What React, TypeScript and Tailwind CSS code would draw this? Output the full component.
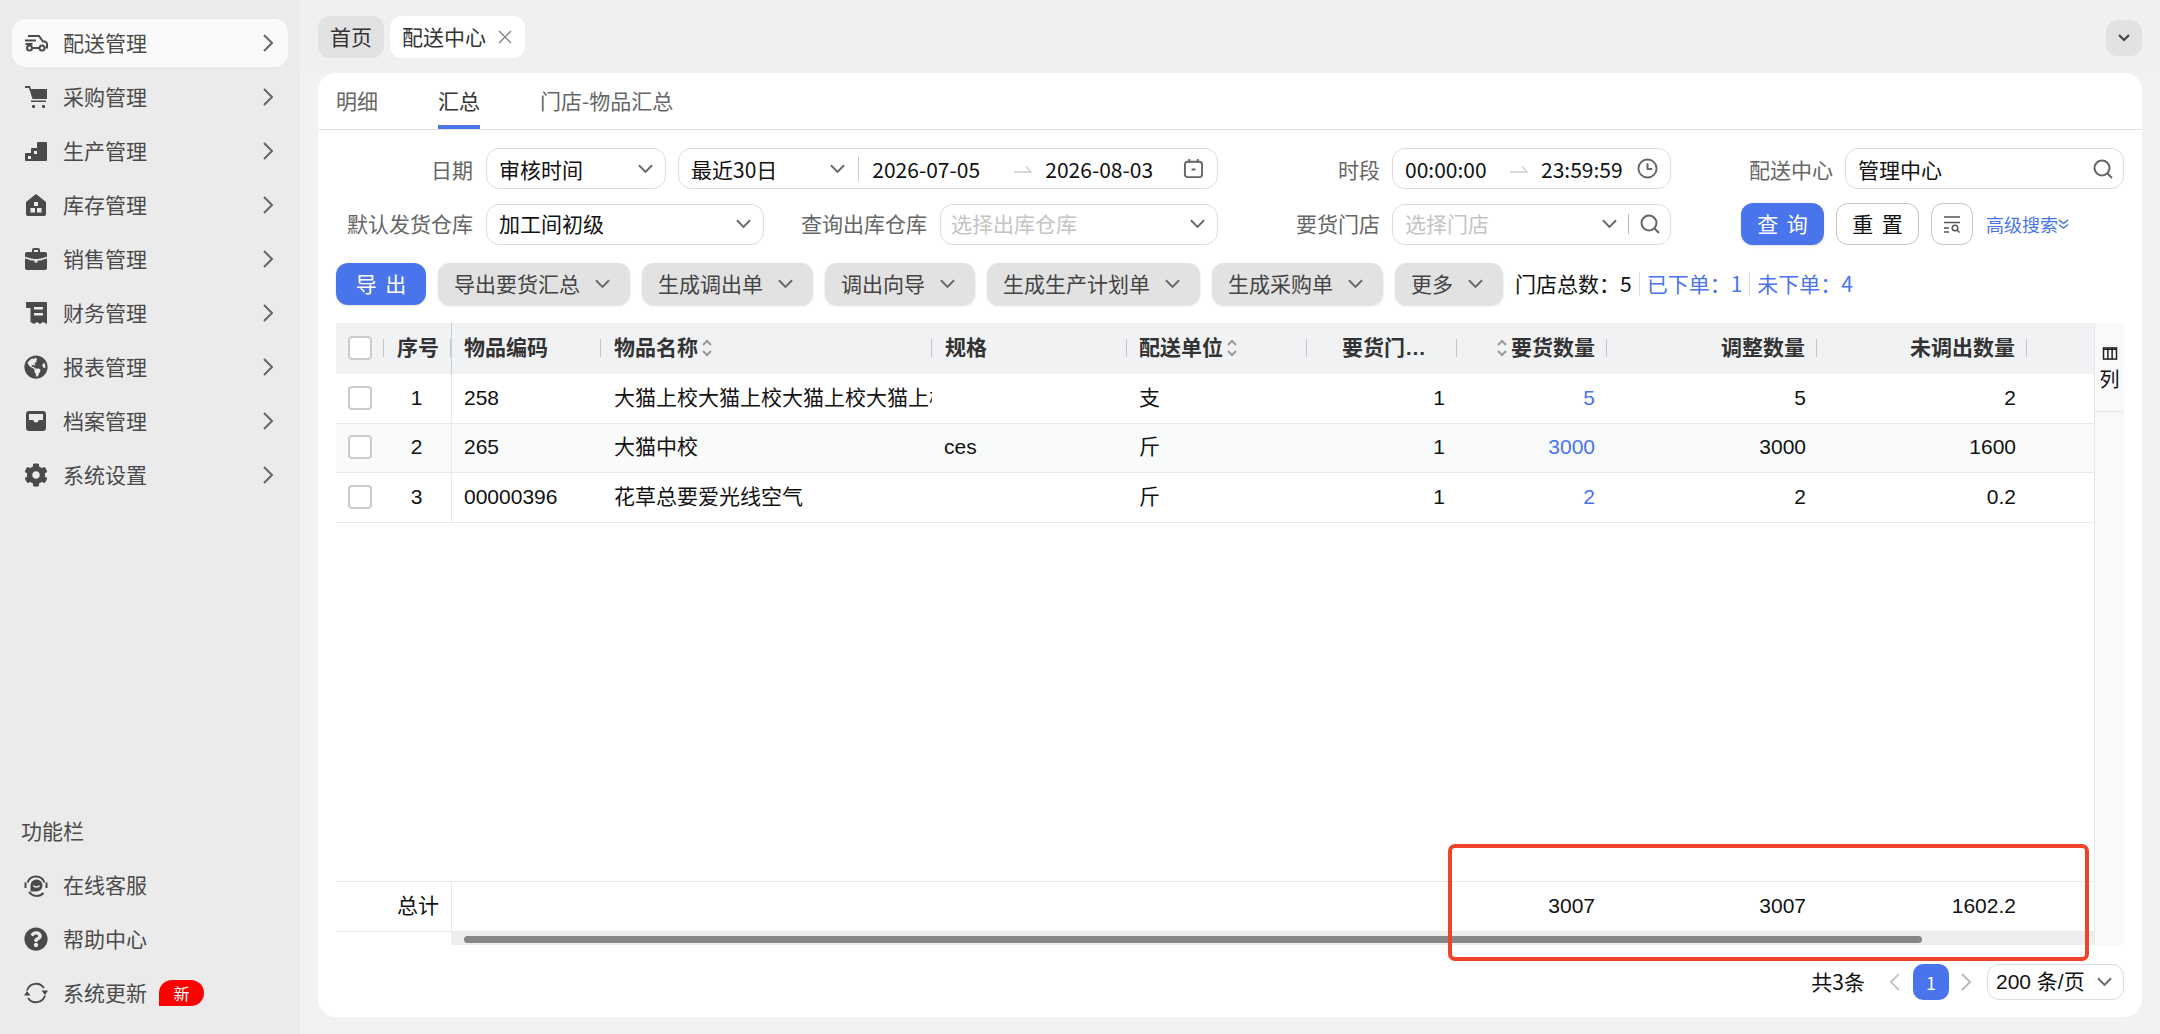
import React from 'react';
import { FaGlobeAmericas, FaCog, FaQuestionCircle } from 'react-icons/fa';

const Chevron = ({ className = 'w-[15px] h-[10px] text-[#666]' }: { className?: string }) => (
  <svg viewBox="0 0 16 10" className={`shrink-0 ${className}`} fill="none" stroke="currentColor" strokeWidth="2">
    <polyline points="1,1 8,8 15,1" />
  </svg>
);

const ChevronRight = ({ className = 'w-[10px] h-[18px] text-[#666]' }: { className?: string }) => (
  <svg viewBox="0 0 10 18" className={`shrink-0 ${className}`} fill="none" stroke="currentColor" strokeWidth="2">
    <polyline points="1,1 9,9 1,17" />
  </svg>
);

const ChevronLeft = () => (
  <svg viewBox="0 0 10 18" className="w-[10px] h-[18px] text-[#bbb]" fill="none" stroke="currentColor" strokeWidth="1.6">
    <polyline points="9,1 1,9 9,17" />
  </svg>
);

const SearchIcon = () => (
  <svg viewBox="0 0 20 20" className="w-[20px] h-[20px] text-[#666] shrink-0" fill="none" stroke="currentColor" strokeWidth="2">
    <circle cx="9" cy="9" r="7.5" />
    <path d="M14.5 14.5 19 19" />
  </svg>
);

const Arrow = () => (
  <svg viewBox="0 0 18 8" className="w-[18px] h-[8px] text-[#ccc] shrink-0" fill="none" stroke="currentColor" strokeWidth="1.3">
    <path d="M0 7h17L12 1.5" />
  </svg>
);

const Sort = () => (
  <svg viewBox="0 0 10 18" className="w-[10px] h-[18px] text-[#999] shrink-0" fill="none" stroke="currentColor" strokeWidth="2">
    <polyline points="1,6 5,2 9,6" />
    <polyline points="1,12 5,16 9,12" />
  </svg>
);

const iconClass = 'w-[24px] h-[24px] text-[#4a4a4a]';

const CarIcon = () => (
  <svg viewBox="0 0 24 24" className={iconClass} fill="none" stroke="currentColor" strokeWidth="2">
    <path d="M4 5h11l4 5.5h1.5c1 0 2.5 1 2.5 2.5v3.500h-1.500" />
    <path d="M1 9.500h11M1.500 13h7" />
    <circle cx="5.500" cy="17" r="2.500" />
    <circle cx="18" cy="17" r="2.500" />
    <path d="M8.500 17h6.500" />
  </svg>
);

const CartIcon = () => (
  <svg viewBox="0 0 24 24" className={iconClass} fill="currentColor">
    <path d="M1 1h5l1 3h16v10H8.500L5 3H1z" />
    <rect x="7" y="15.500" width="15" height="1.500" />
    <rect x="8" y="20" width="3" height="3" rx="1" />
    <rect x="18" y="20" width="3" height="3" rx="1" />
  </svg>
);

const StairsIcon = () => (
  <svg viewBox="0 0 24 24" className={iconClass} fill="currentColor">
    <path d="M2 22a1 1 0 0 1-1-1v-6a1 1 0 0 1 1-1h5V10a1 1 0 0 1 1-1h5V4a1 1 0 0 1 1-1h8a1 1 0 0 1 1 1v17a1 1 0 0 1-1 1z" />
    <rect x="4" y="17" width="3" height="3" fill="#ebebeb" />
    <rect x="10" y="12" width="3" height="3" fill="#ebebeb" />
  </svg>
);

const HouseIcon = () => (
  <svg viewBox="0 0 24 24" className={iconClass} fill="currentColor">
    <path d="M2 9 12 1l10 8v12a2 2 0 0 1-2 2H4a2 2 0 0 1-2-2z" />
    <rect x="10" y="9" width="4" height="4" fill="#ebebeb" />
    <rect x="6.500" y="15" width="4.500" height="4.500" fill="#ebebeb" />
    <rect x="13" y="15" width="4.500" height="4.500" fill="#ebebeb" />
  </svg>
);

const CaseIcon = () => (
  <svg viewBox="0 0 24 24" className={iconClass} fill="currentColor">
    <path d="M8 5V3a2 2 0 0 1 2-2h4a2 2 0 0 1 2 2v2h5a2 2 0 0 1 2 2v14a2 2 0 0 1-2 2H3a2 2 0 0 1-2-2V7a2 2 0 0 1 2-2zm2 0h4V3h-4z" />
    <path d="M1 10.500c5 2 8 2.500 11 2.500s6-.5 11-2.500" fill="none" stroke="#ebebeb" strokeWidth="1.600" />
    <rect x="10.500" y="12" width="3" height="3.500" fill="#ebebeb" />
  </svg>
);

const ReceiptIcon = () => (
  <svg viewBox="0 0 24 24" className={iconClass} fill="currentColor">
    <path d="M2 1h20a1 1 0 0 1 1 1v21l-4-2-3 2-3-2-3 2-3.500-2V7H3a1 1 0 0 1-1-1z" />
    <rect x="10" y="6" width="9" height="2.500" fill="#ebebeb" />
    <rect x="10" y="12" width="9" height="2.500" fill="#ebebeb" />
  </svg>
);

const InboxIcon = () => (
  <svg viewBox="0 0 24 24" className={iconClass} fill="currentColor">
    <path d="M5 2h14a3 3 0 0 1 3 3v14a3 3 0 0 1-3 3H5a3 3 0 0 1-3-3V5a3 3 0 0 1 3-3z" />
    <path d="M5 5h14v6h-4.500a2.500 2.500 0 0 1-5 0H5z" fill="#ebebeb" />
  </svg>
);

const ServiceIcon = () => (
  <svg viewBox="0 0 24 24" className={iconClass} fill="none" stroke="currentColor" strokeWidth="2">
    <path d="M3.500 9.500a9 9 0 0 1 17 0" />
    <path d="M5 19a9.500 9.500 0 0 0 14.500 1" />
    <rect x="0.500" y="9.500" width="2" height="5.500" fill="currentColor" stroke="none" />
    <rect x="21.500" y="9.500" width="2" height="5.500" fill="currentColor" stroke="none" />
    <path d="M12.500 6.500a6 6 0 0 1 6 6 6 6 0 0 1-6 6h-6v-6a6 6 0 0 1 6-6z" fill="currentColor" stroke="none" />
    <path d="M9.500 12.500c.8 2 5 2 6 0" stroke="#ebebeb" strokeWidth="1.500" />
  </svg>
);

const RefreshIcon = () => (
  <svg viewBox="0 0 24 24" className={iconClass} fill="none" stroke="currentColor" strokeWidth="1.800">
    <path d="M3 9.500A9.500 9.500 0 0 1 20 7" />
    <path d="M21 14.500A9.500 9.500 0 0 1 4 17" />
    <path d="M17.500 9.500H24L21 14z" fill="currentColor" stroke="none" />
    <path d="M0 14.500h6.500L3 10z" fill="currentColor" stroke="none" />
  </svg>
);

const CalendarIcon = () => (
  <svg viewBox="0 0 22 22" className="w-[21px] h-[21px] text-[#666] shrink-0" fill="none" stroke="currentColor" strokeWidth="2">
    <rect x="2" y="4" width="18" height="16" rx="3" />
    <path d="M6.500 1v4M15.500 1v4M9 12h4" />
  </svg>
);

const ClockIcon = () => (
  <svg viewBox="0 0 22 22" className="w-[21px] h-[21px] text-[#666] shrink-0" fill="none" stroke="currentColor" strokeWidth="2">
    <circle cx="11" cy="11" r="9.500" />
    <path d="M11 5.500V11.500H16" />
  </svg>
);

const menu = [
  { name: '配送管理', icon: <CarIcon />, active: true },
  { name: '采购管理', icon: <CartIcon /> },
  { name: '生产管理', icon: <StairsIcon /> },
  { name: '库存管理', icon: <HouseIcon /> },
  { name: '销售管理', icon: <CaseIcon /> },
  { name: '财务管理', icon: <ReceiptIcon /> },
  { name: '报表管理', icon: <FaGlobeAmericas className={iconClass} /> },
  { name: '档案管理', icon: <InboxIcon /> },
  { name: '系统设置', icon: <FaCog className={iconClass} /> },
];

const Sidebar = () => (
  <aside className="w-[300px] shrink-0 h-full bg-[#ebebeb] flex flex-col pt-[19px] pb-[17px] text-[21px] text-[#4a4a4a]">
    <div className="flex flex-col gap-[6px]">
      {menu.map(m => (
        <div
          key={m.name}
          className={`mx-[12px] h-[48px] flex items-center pl-[12px] pr-[15px] rounded-[14px] ${m.active ? 'bg-[#fafafa]' : ''}`}
        >
          {m.icon}
          <span className="ml-[15px] flex-1">{m.name}</span>
          <ChevronRight />
        </div>
      ))}
    </div>
    <div className="mt-auto">
      <div className="pl-[21px] h-[30px] leading-[30px] mb-[16px]">功能栏</div>
      <div className="flex flex-col gap-[6px]">
        <div className="mx-[12px] h-[48px] flex items-center pl-[12px]">
          <ServiceIcon />
          <span className="ml-[15px]">在线客服</span>
        </div>
        <div className="mx-[12px] h-[48px] flex items-center pl-[12px]">
          <FaQuestionCircle className={iconClass} />
          <span className="ml-[15px]">帮助中心</span>
        </div>
        <div className="mx-[12px] h-[48px] flex items-center pl-[12px]">
          <RefreshIcon />
          <span className="ml-[15px]">系统更新</span>
          <span className="ml-[12px] w-[45px] h-[26px] bg-[#ff0000] text-white text-[16px] leading-[26px] text-center rounded-t-[13px] rounded-br-[13px]">新</span>
        </div>
      </div>
    </div>
  </aside>
);

const Label = ({ className, children }: { className: string; children: React.ReactNode }) => (
  <div className={`text-right text-[#666] shrink-0 ${className}`}>{children}</div>
);

const Box = ({ className = '', children }: { className?: string; children: React.ReactNode }) => (
  <div className={`h-[41px] border border-[#dcdcdc] rounded-[13px] bg-white flex items-center shrink-0 text-[#111] ${className}`}>
    {children}
  </div>
);

const ActionButton = ({ label, className = '' }: { label: string; className?: string }) => (
  <div className={`h-[42px] bg-[#e2e2e2] rounded-[12px] shadow-sm pl-[16px] pr-[20px] flex items-center text-[#444] shrink-0 ${className}`}>
    <span>{label}</span>
    <Chevron className="w-[15px] h-[10px] text-[#666] ml-[15px]" />
  </div>
);

const Filters = () => (
  <div className="pt-[18px] flex flex-col gap-[14px] text-[21px]">
    <div className="flex items-center">
      <Label className="w-[155px] mr-[13px] pt-[2px]">日期</Label>
      <Box className="w-[180px] px-[12px] justify-between [&>span]:pt-[2px]">
        <span>审核时间</span>
        <Chevron />
      </Box>
      <Box className="w-[540px] ml-[12px] pl-[12px] pr-[13px] [&>span]:pt-[2px]">
        <span>最近30日</span>
        <Chevron className="w-[15px] h-[10px] text-[#666] ml-[53px]" />
        <span className="w-px h-[25px] bg-[#ccc] ml-[13px]" />
        <span className="ml-[13px] w-[142px]">2026-07-05</span>
        <Arrow />
        <span className="ml-[13px] flex-1">2026-08-03</span>
        <CalendarIcon />
      </Box>
      <Label className="w-[162px] mr-[12px] pt-[2px]">时段</Label>
      <Box className="w-[279px] pl-[12px] pr-[12px] [&>span]:pt-[2px]">
        <span className="w-[105px]">00:00:00</span>
        <Arrow />
        <span className="ml-[13px] flex-1">23:59:59</span>
        <ClockIcon />
      </Box>
      <Label className="w-[162px] mr-[12px] pt-[2px]">配送中心</Label>
      <Box className="w-[279px] pl-[12px] pr-[10px] justify-between [&>span]:pt-[2px]">
        <span>管理中心</span>
        <SearchIcon />
      </Box>
    </div>
    <div className="flex items-center">
      <Label className="w-[155px] mr-[13px]">默认发货仓库</Label>
      <Box className="w-[278px] px-[12px] justify-between">
        <span>加工间初级</span>
        <Chevron />
      </Box>
      <Label className="w-[163px] mr-[13px]">查询出库仓库</Label>
      <Box className="w-[278px] pl-[10px] pr-[12px] justify-between">
        <span className="text-[#c4c4c4]">选择出库仓库</span>
        <Chevron />
      </Box>
      <Label className="w-[162px] mr-[12px]">要货门店</Label>
      <Box className="w-[279px] pl-[12px] pr-[10px]">
        <span className="flex-1 text-[#c4c4c4]">选择门店</span>
        <Chevron />
        <span className="w-px h-[20px] bg-[#bbb] mx-[11px]" />
        <SearchIcon />
      </Box>
      <div className="ml-[70px] w-[83px] h-[42px] rounded-[12px] bg-[#4a74ec] text-white flex items-center justify-center shadow-sm [word-spacing:4px]">查 询</div>
      <div className="ml-[12px] w-[83px] h-[42px] rounded-[12px] border border-[#c4c4c4] text-[#111] bg-white flex items-center justify-center [word-spacing:4px]">重 置</div>
      <div className="ml-[12px] w-[42px] h-[42px] rounded-[12px] border border-[#c4c4c4] bg-white flex items-center justify-center">
        <svg viewBox="0 0 18 18" className="w-[18px] h-[18px] text-[#555]" fill="none" stroke="currentColor" strokeWidth="1.500">
          <path d="M1 2h16M1 7.500h16M1 13h5M1 17h5" />
          <circle cx="12" cy="13" r="2.800" />
          <path d="m14 15 2.500 2.500" />
        </svg>
      </div>
      <div className="ml-[13px] flex items-center text-[18px] text-[#4a74ec]">
        <span>高级搜索</span>
        <svg viewBox="0 0 12 12" className="w-[11px] h-[12px]" fill="none" stroke="currentColor" strokeWidth="1.500">
          <path d="m1 1.500 5 4 5-4M1 6.500l5 4 5-4" />
        </svg>
      </div>
    </div>
    <div className="flex items-center mt-[4px] pl-[18px] gap-[12px]">
      <div className="w-[90px] h-[42px] rounded-[12px] bg-[#4a74ec] text-white flex items-center justify-center shadow-sm [word-spacing:4px] shrink-0">导 出</div>
      <ActionButton label="导出要货汇总" />
      <ActionButton label="生成调出单" />
      <ActionButton label="调出向导" />
      <ActionButton label="生成生产计划单" />
      <ActionButton label="生成采购单" />
      <ActionButton label="更多" />
      <div className="flex items-center text-[#111]">
        <span>{'门店总数\uFF1A'}</span>
        <span>5</span>
        <span className="w-px h-[24px] bg-[#ddd] mx-[7px]" />
        <span className="text-[#4a74ec]">{'已下单\uFF1A1'}</span>
        <span className="w-px h-[24px] bg-[#ddd] mx-[7px]" />
        <span className="text-[#4a74ec]">{'未下单\uFF1A4'}</span>
      </div>
    </div>
  </div>
);

const grid = 'grid grid-cols-[48px_67px_150px_331px_195px_180px_150px_150px_210px_210px_67px]';

const Check = () => <span className="block w-[24px] h-[24px] rounded-[4px] border-2 border-[#ccc] bg-white" />;

const Sep = ({ className = '' }: { className?: string }) => <span className={`w-px h-[18px] bg-[#c4c6ca] shrink-0 ${className}`} />;

const rows = [
  { no: 1, code: '258', name: '大猫上校大猫上校大猫上校大猫上校大猫上校', spec: '', unit: '支', stores: 1, qty: 5, adj: 5, rest: 2, h: 'h-[50px]', bg: 'bg-white' },
  { no: 2, code: '265', name: '大猫中校', spec: 'ces', unit: '斤', stores: 1, qty: 3000, adj: 3000, rest: 1600, h: 'h-[49px]', bg: 'bg-[#f9fafa]' },
  { no: 3, code: '00000396', name: '花草总要爱光线空气', spec: '', unit: '斤', stores: 1, qty: 2, adj: 2, rest: 0.2, h: 'h-[50px]', bg: 'bg-white' },
];

const Table = () => (
  <div className="mt-[18px] mx-[18px] h-[622px] flex font-['Liberation_Sans','Noto_Sans_CJK_SC',sans-serif] text-[21px] text-[#111]">
    <div className="flex-1 min-w-0 flex flex-col">
      <div className={`${grid} h-[51px] bg-[#f1f2f4] font-bold text-[#333]`}>
        <div className="flex items-center justify-between pl-[12px] pb-[2px]"><Check /><Sep /></div>
        <div className="flex items-center justify-between pl-[13px] pb-[2px]"><span>序号</span><Sep /></div>
        <div className="flex items-center justify-between pl-[12px] pb-[2px] border-l border-[#c8ccd4]"><span>物品编码</span><Sep /></div>
        <div className="flex items-center pl-[13px] pb-[2px]"><span>物品名称</span><span className="ml-[4px]"><Sort /></span><Sep className="ml-auto" /></div>
        <div className="flex items-center justify-between pl-[13px] pb-[2px]"><span>规格</span><Sep /></div>
        <div className="flex items-center pl-[12px] pb-[2px]"><span>配送单位</span><span className="ml-[4px]"><Sort /></span><Sep className="ml-auto" /></div>
        <div className="flex items-center justify-end pb-[2px]"><span className="w-[84px] truncate mr-[30px]">要货门店数</span><Sep /></div>
        <div className="flex items-center justify-end pb-[2px]"><Sort /><span className="ml-[4px] mr-[11px]">要货数量</span><Sep /></div>
        <div className="flex items-center justify-end pb-[2px]"><span className="mr-[11px]">调整数量</span><Sep /></div>
        <div className="flex items-center justify-end pb-[2px]"><span className="mr-[11px]">未调出数量</span><Sep /></div>
        <div />
      </div>
      {rows.map(r => (
        <div key={r.no} className={`${grid} ${r.h} ${r.bg} border-b border-[#e8e8e8] items-stretch`}>
          <div className="flex items-center pl-[12px] pb-[2px]"><Check /></div>
          <div className="flex items-center justify-center pr-[2px] pb-[2px]">{r.no}</div>
          <div className="flex items-center pl-[12px] pb-[2px] border-l border-[#e5e7eb]">{r.code}</div>
          <div className="flex items-center pl-[13px] pb-[2px] overflow-hidden"><span className="whitespace-nowrap overflow-hidden">{r.name}</span></div>
          <div className="flex items-center pl-[12px] pb-[2px]">{r.spec}</div>
          <div className="flex items-center pl-[12px] pb-[2px]">{r.unit}</div>
          <div className="flex items-center justify-end pr-[12px] pb-[2px]">{r.stores}</div>
          <div className="flex items-center justify-end pr-[12px] pb-[2px] text-[#4a74ec]">{r.qty}</div>
          <div className="flex items-center justify-end pr-[11px] pb-[2px]">{r.adj}</div>
          <div className="flex items-center justify-end pr-[11px] pb-[2px]">{r.rest}</div>
          <div />
        </div>
      ))}
      <div className="flex-1" />
      <div className={`${grid} h-[51px] border-y border-[#e8e8e8]`}>
        <div className="col-span-2 flex items-center justify-end pr-[12px] pb-[2px]">总计</div>
        <div className="border-l border-[#e8e8e8]" />
        <div /><div /><div /><div />
        <div className="flex items-center justify-end pr-[12px] pb-[2px]">3007</div>
        <div className="flex items-center justify-end pr-[11px] pb-[2px]">3007</div>
        <div className="flex items-center justify-end pr-[11px] pb-[2px]">1602.2</div>
        <div />
      </div>
      <div className="h-[13px] ml-[115px] bg-[#eeeeee] pl-[13px] pt-[4px]">
        <div className="w-[1458px] h-[7px] rounded-full bg-[#868686]" />
      </div>
    </div>
    <div className="w-[30px] shrink-0 bg-[#f8f9fb] border-l border-[#e5e7eb]">
      <div className="h-[89px] border-b border-[#e8e8e8] flex flex-col items-center pt-[24px] text-[20px] leading-[24px]">
        <svg viewBox="0 0 16 14" className="w-[16px] h-[13px] text-[#222]" fill="none" stroke="currentColor" strokeWidth="1.600">
          <rect x="1" y="1" width="14" height="12" />
          <path d="M1 2.500h14M5.700 1v12M10.300 1v12" />
        </svg>
        <span className="mt-[8px]">列</span>
      </div>
    </div>
  </div>
);

const Pager = () => (
  <div className="mt-[19px] mr-[18px] h-[36px] flex items-center justify-end text-[21px] text-[#111]">
    <span>共3条</span>
    <span className="ml-[25px]"><ChevronLeft /></span>
    <span className="ml-[13px] w-[36px] h-[36px] rounded-[10px] bg-[#4a74ec] text-white text-[18px] flex items-center justify-center">1</span>
    <span className="ml-[12px]"><ChevronRight className="w-[10px] h-[18px] text-[#bbb]" /></span>
    <span className="ml-[16px] w-[137px] h-[36px] border border-[#dcdcdc] rounded-[12px] flex items-center pl-[8px] pr-[11px] justify-between">
      <span className="font-['Liberation_Sans','Noto_Sans_CJK_SC',sans-serif]">200 条/页</span>
      <Chevron />
    </span>
  </div>
);

export default function App() {
  return (
    <div className="relative w-[2160px] h-[1034px] flex overflow-hidden bg-[#f1f2f4] font-['Noto_Sans_CJK_SC',sans-serif]">
      <Sidebar />
      <main className="flex-1 min-w-0 flex flex-col">
        <div className="h-[73px] shrink-0 bg-[#f0f0f0] pl-[18px] pr-[18px] pt-[16px] flex items-start gap-[6px] text-[21px] text-[#333]">
          <div className="h-[42px] px-[12px] rounded-[12px] bg-[#e2e2e2] flex items-center">首页</div>
          <div className="h-[42px] pl-[12px] pr-[13px] rounded-[12px] bg-white flex items-center">
            配送中心
            <svg viewBox="0 0 14 14" className="w-[14px] h-[14px] ml-[12px] text-[#888]" fill="none" stroke="currentColor" strokeWidth="1.500">
              <path d="m1 1 12 12M13 1 1 13" />
            </svg>
          </div>
          <div className="ml-auto mt-[4px] w-[36px] h-[36px] rounded-[12px] bg-[#e2e2e2] flex items-center justify-center">
            <svg viewBox="0 0 12 8" className="w-[12px] h-[8px] text-[#444]" fill="none" stroke="currentColor" strokeWidth="2.200">
              <polyline points="1,1 6,6 11,1" />
            </svg>
          </div>
        </div>
        <div className="ml-[18px] w-[1824px] h-[944px] rounded-[18px] bg-white flex flex-col">
          <div className="h-[57px] shrink-0 border-b border-[#dedede] pl-[18px] flex items-stretch text-[21px] text-[#666]">
            <div className="flex items-center">明细</div>
            <div className="ml-[60px] flex items-center text-[#333] border-b-[4px] border-[#4a74ec] pt-[4px] rounded-b-none">汇总</div>
            <div className="ml-[60px] flex items-center">门店-物品汇总</div>
          </div>
          <Filters />
          <Table />
          <Pager />
        </div>
      </main>
      <div className="absolute left-[1448px] top-[844px] w-[641px] h-[117px] border-[4px] border-[#ee4328] rounded-[7px]" />
    </div>
  );
}
